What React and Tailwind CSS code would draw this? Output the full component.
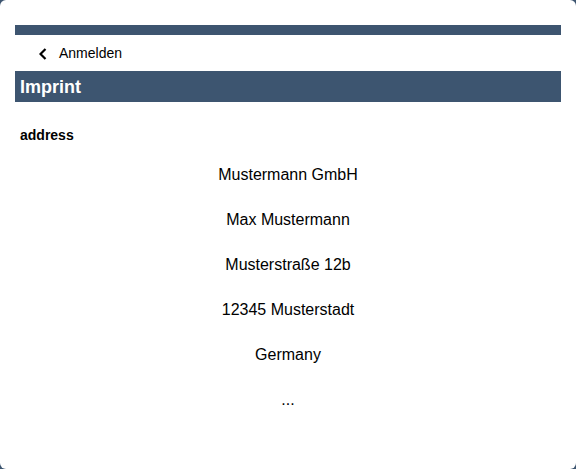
import React from 'react'

const lines = [
  'Mustermann GmbH',
  'Max Mustermann',
  'Musterstraße 12b',
  '12345 Musterstadt',
  'Germany',
  '...',
]

const App = () => {
  return (
    <div className="h-[469px] w-[576px] bg-[#3d5570] font-['Liberation_Sans',Arial,sans-serif] text-black">
      <div className="h-full rounded-[6px] bg-white px-[15px] pt-[25px]">
        {/* top bar */}
        <div className="h-[10px] bg-[#3d5570]" />

        {/* back link */}
        <div className="flex h-[36px] items-center pl-[24px]">
          <svg width="8" height="12" viewBox="0 0 8 12" className="mt-[1px]">
            <polyline
              points="6.5,1 1.5,6 6.5,11"
              fill="none"
              stroke="#000"
              strokeWidth="2.2"
            />
          </svg>
          <span className="ml-[12px] text-[14px] leading-[16px]">Anmelden</span>
        </div>

        {/* header */}
        <div className="flex h-[31px] items-center bg-[#3d5570] px-[5px]">
          <h1 className="text-[18px] font-bold leading-[20px] text-white">Imprint</h1>
        </div>

        {/* address */}
        <div className="pt-[25px]">
          <h2 className="px-[5px] text-[14px] font-bold leading-[16px]">address</h2>
          <div className="mt-[9px]">
            {lines.map((line) => (
              <p key={line} className="h-[45px] text-center text-[16px] leading-[45px]">
                {line}
              </p>
            ))}
          </div>
        </div>
      </div>
    </div>
  )
}

export default App
